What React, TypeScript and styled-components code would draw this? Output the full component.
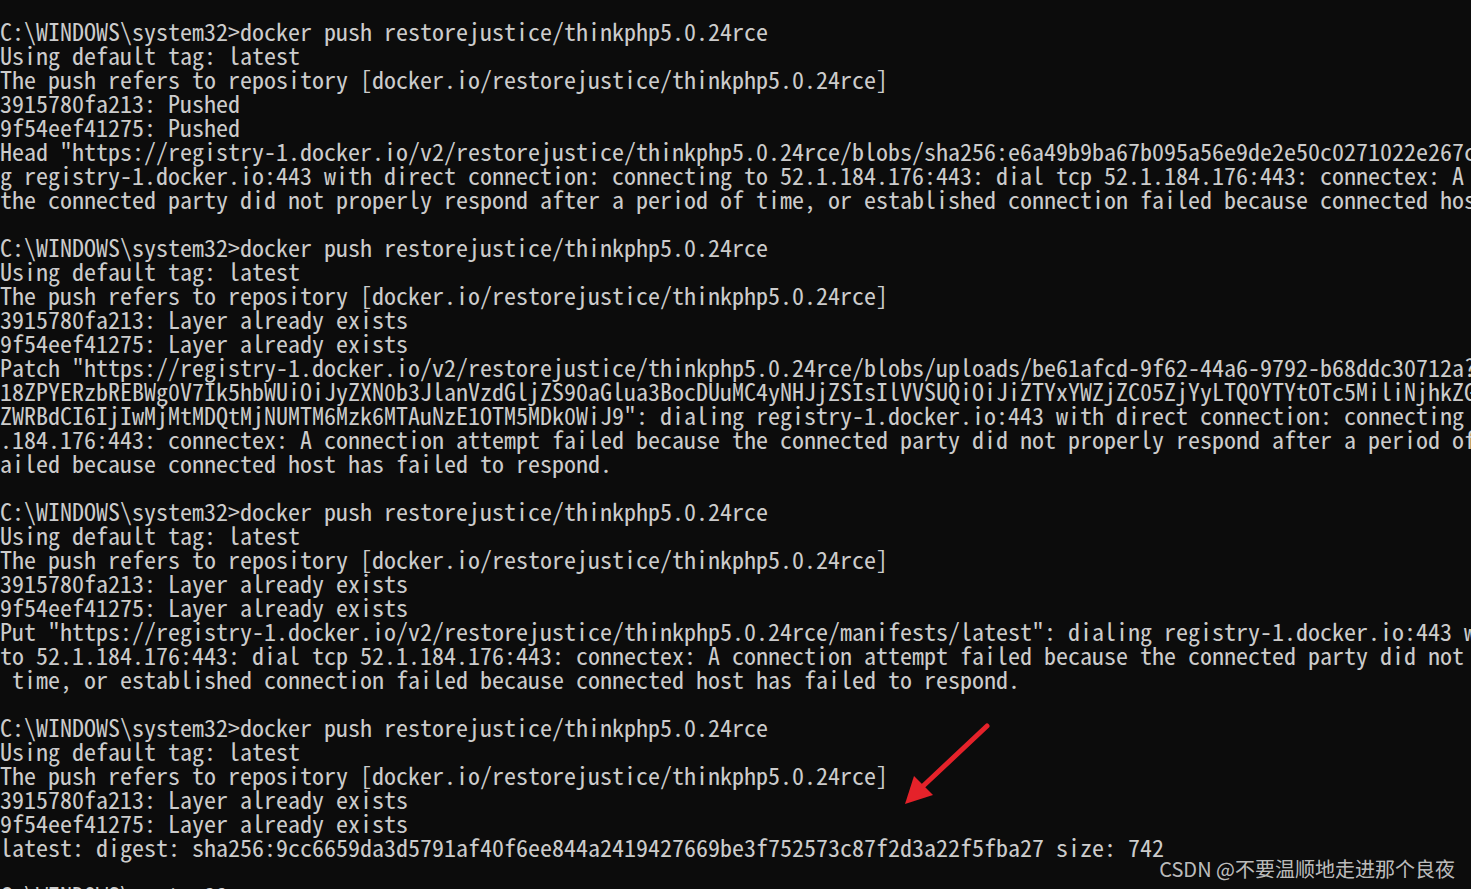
import React from "react";
import styled, { createGlobalStyle } from "styled-components";

const GlobalStyle = createGlobalStyle`
  html, body {
    margin: 0;
    padding: 0;
    background: #0c0c0c;
    overflow: hidden;
  }
  #root {
    width: 1471px;
    height: 889px;
  }
`;

const Screen = styled.div`
  position: relative;
  width: 1471px;
  height: 889px;
  overflow: hidden;
  background: #0c0c0c;
`;

const Console = styled.div`
  display: flex;
  flex-direction: column;
  padding-top: 19px;
  font-family: "Noto Sans Mono CJK SC", "Liberation Mono", monospace;
  font-size: 24px;
  line-height: 24px;
  color: #cccccc;
`;

const Line = styled.div`
  height: 24px;
  white-space: pre;
`;

const Watermark = styled.div`
  position: absolute;
  right: 16px;
  top: 857px;
  font-family: "Noto Sans CJK SC", "Noto Sans", sans-serif;
  font-size: 20px;
  line-height: 24px;
  color: rgba(255, 255, 255, 0.74);
  white-space: nowrap;
`;

const ArrowLayer = styled.svg`
  position: absolute;
  left: 0;
  top: 0;
  pointer-events: none;
`;

const PROMPT = "C:\\WINDOWS\\system32>docker push restorejustice/thinkphp5.0.24rce";
const TAG = "Using default tag: latest";
const REPO = "The push refers to repository [docker.io/restorejustice/thinkphp5.0.24rce]";
const L1E = "3915780fa213: Layer already exists";
const L2E = "9f54eef41275: Layer already exists";

const lines: string[] = [
  PROMPT,
  TAG,
  REPO,
  "3915780fa213: Pushed",
  "9f54eef41275: Pushed",
  'Head "https://registry-1.docker.io/v2/restorejustice/thinkphp5.0.24rce/blobs/sha256:e6a49b9ba67b095a56e9de2e50c0271022e267c0',
  "g registry-1.docker.io:443 with direct connection: connecting to 52.1.184.176:443: dial tcp 52.1.184.176:443: connectex: A connection",
  "the connected party did not properly respond after a period of time, or established connection failed because connected host has failed",
  "",
  PROMPT,
  TAG,
  REPO,
  L1E,
  L2E,
  'Patch "https://registry-1.docker.io/v2/restorejustice/thinkphp5.0.24rce/blobs/uploads/be61afcd-9f62-44a6-9792-b68ddc30712a?_state',
  "18ZPYERzbREBWg0V7Ik5hbWUiOiJyZXN0b3JlanVzdGljZS90aGlua3BocDUuMC4yNHJjZSIsIlVVSUQiOiJiZTYxYWZjZC05ZjYyLTQ0YTYtOTc5MiliNjhkZGMz",
  'ZWRBdCI6IjIwMjMtMDQtMjNUMTM6Mzk6MTAuNzE1OTM5MDk0WiJ9": dialing registry-1.docker.io:443 with direct connection: connecting to 52',
  ".184.176:443: connectex: A connection attempt failed because the connected party did not properly respond after a period of time",
  "ailed because connected host has failed to respond.",
  "",
  PROMPT,
  TAG,
  REPO,
  L1E,
  L2E,
  'Put "https://registry-1.docker.io/v2/restorejustice/thinkphp5.0.24rce/manifests/latest": dialing registry-1.docker.io:443 with',
  "to 52.1.184.176:443: dial tcp 52.1.184.176:443: connectex: A connection attempt failed because the connected party did not properly",
  " time, or established connection failed because connected host has failed to respond.",
  "",
  PROMPT,
  TAG,
  REPO,
  L1E,
  L2E,
  "latest: digest: sha256:9cc6659da3d5791af40f6ee844a2419427669be3f752573c87f2d3a22f5fba27 size: 742",
  "",
  "C:\\WINDOWS\\system32>",
];

export default function App() {
  return (
    <>
      <GlobalStyle />
      <Screen>
        <Console>
          {lines.map((text, i) => (
            <Line key={i}>{text === "" ? " " : text}</Line>
          ))}
        </Console>
        <ArrowLayer width="1471" height="889" viewBox="0 0 1471 889">
          <line
            x1="987"
            y1="726"
            x2="921"
            y2="788"
            stroke="#e5222a"
            strokeWidth="5"
            strokeLinecap="round"
          />
          <polygon points="905,804 914,776 933,795" fill="#e5222a" />
        </ArrowLayer>
        <Watermark>CSDN @不要温顺地走进那个良夜</Watermark>
      </Screen>
    </>
  );
}
